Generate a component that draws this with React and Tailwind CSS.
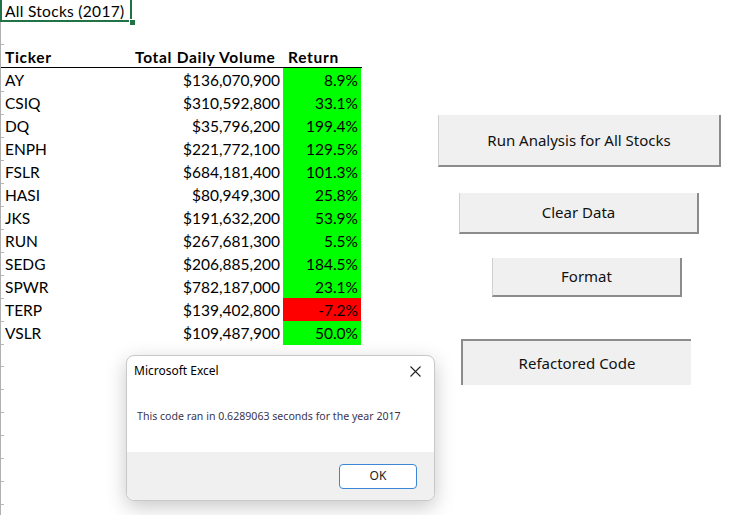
const rows = [
  ["AY", "$136,070,900", "8.9%", true],
  ["CSIQ", "$310,592,800", "33.1%", true],
  ["DQ", "$35,796,200", "199.4%", true],
  ["ENPH", "$221,772,100", "129.5%", true],
  ["FSLR", "$684,181,400", "101.3%", true],
  ["HASI", "$80,949,300", "25.8%", true],
  ["JKS", "$191,632,200", "53.9%", true],
  ["RUN", "$267,681,300", "5.5%", true],
  ["SEDG", "$206,885,200", "184.5%", true],
  ["SPWR", "$782,187,000", "23.1%", true],
  ["TERP", "$139,402,800", "-7.2%", false],
  ["VSLR", "$109,487,900", "50.0%", true],
];

function Tick() {
  return <div className="self-stretch flex flex-col justify-end"><div className="h-px bg-[#b8b8b8]" /></div>;
}

export default function App() {
  return (
    <div className="relative w-[732px] h-[515px] bg-white overflow-hidden flex text-black">
      <div
        className="relative w-[362px] h-full flex flex-col border-l border-[#b0b0b0] text-[15.5px]"
        style={{ fontFamily: "Lato, sans-serif" }}
      >
        {/* row 1 */}
        <div className="grid grid-cols-[3px_126px_153px_78px] h-[22px] shrink-0">
          <Tick />
          <div className="flex items-center pl-px pt-px leading-none tracking-[0.3px]">All Stocks (2017)</div>
          <div />
          <div />
        </div>
        <div className="absolute left-[-1px] top-[-2px] w-[132px] h-[24px] border-2 border-[#217346]" />
        <div className="absolute left-[128px] top-[19px] w-[5px] h-[5px] bg-[#217346] border border-white box-content" />
        {/* row 2 */}
        <div className="grid grid-cols-[3px_126px_153px_78px] h-[23px] shrink-0">
          <Tick />
        </div>
        {/* header */}
        <div className="grid grid-cols-[3px_126px_153px_78px] h-[23px] shrink-0 border-b border-black font-bold tracking-[0.7px]">
          <div />
          <div className="flex items-center pl-px pt-px">Ticker</div>
          <div className="flex items-center pl-[5px] pt-px">Total Daily Volume</div>
          <div className="flex items-center pl-[5px] pt-px">Return</div>
        </div>
        {rows.map(([t, v, r, pos]) => (
          <div key={t} className="grid grid-cols-[3px_126px_153px_78px] h-[23px] shrink-0">
            <Tick />
            <div className="flex items-center pl-px pt-px">{t}</div>
            <div className="flex items-center justify-end pr-[3px] pt-px">{v}</div>
            <div className={`flex items-center justify-end pr-[3px] pt-px ${pos ? "bg-[#00ff00]" : "bg-[#ff0000]"}`}>{r}</div>
          </div>
        ))}
        {Array.from({ length: 8 }).map((_, i) => (
          <div key={i} className="grid grid-cols-[3px_126px_153px_78px] h-[23px] shrink-0">
            <Tick />
          </div>
        ))}
      </div>

      {/* buttons */}
      <div
        className="flex flex-col items-start ml-[76px] text-[15px] text-[#111]"
        style={{ fontFamily: "'Noto Sans', 'Open Sans', sans-serif" }}
      >
        <div className="mt-[115px] w-[283px] h-[52px] flex items-center justify-center bg-[#f0f0f0] border-l border-[#d0d0d0] border-r-2 border-b-2 border-r-[#8c8c8c] border-b-[#8c8c8c]">
          Run Analysis for All Stocks
        </div>
        <div className="mt-[26px] ml-[21px] w-[240px] h-[41px] flex items-center justify-center bg-[#f0f0f0] border-l border-[#d0d0d0] border-r-2 border-b-2 border-r-[#8c8c8c] border-b-[#8c8c8c]">
          Clear Data
        </div>
        <div className="mt-[24px] ml-[54px] w-[190px] h-[39px] flex items-center justify-center bg-[#f0f0f0] border-l border-[#d0d0d0] border-r-2 border-b-2 border-r-[#8c8c8c] border-b-[#8c8c8c]">
          Format
        </div>
        <div className="mt-[42px] ml-[23px] w-[230px] h-[46px] flex items-center justify-center bg-[#f0f0f0] border-l-2 border-t-2 border-[#8c8c8c]">
          Refactored Code
        </div>
      </div>

      {/* dialog */}
      <div
        className="absolute left-[126px] top-[355px] w-[309px] h-[146px] flex flex-col rounded-[8px] border border-[#c8c8c8] bg-white overflow-hidden shadow-[0_6px_20px_rgba(0,0,0,0.22)]"
        style={{ fontFamily: "'Noto Sans', 'Open Sans', sans-serif" }}
      >
        <div className="flex items-center justify-between h-[28px] pl-[7px] pr-[10px] pt-[2px] text-[12px] text-black">
          <span>Microsoft Excel</span>
          <svg width="11" height="11" viewBox="0 0 11 11" className="mr-[3px]">
            <path d="M0.5 0.5 L10.5 10.5 M10.5 0.5 L0.5 10.5" stroke="#222" strokeWidth="1.1" />
          </svg>
        </div>
        <div className="flex-1 flex items-center pl-[10px] pb-[3px] text-[10.6px] text-[#3b3550]">
          This code ran in 0.6289063 seconds for the year 2017
        </div>
        <div className="h-[48px] bg-[#f0f0f0] flex items-center justify-end pr-[17px]">
          <div className="w-[78px] h-[25px] rounded-[4px] border border-[#3b86d6] bg-white flex items-center justify-center text-[12px] text-[#222]">
            OK
          </div>
        </div>
      </div>
    </div>
  );
}
